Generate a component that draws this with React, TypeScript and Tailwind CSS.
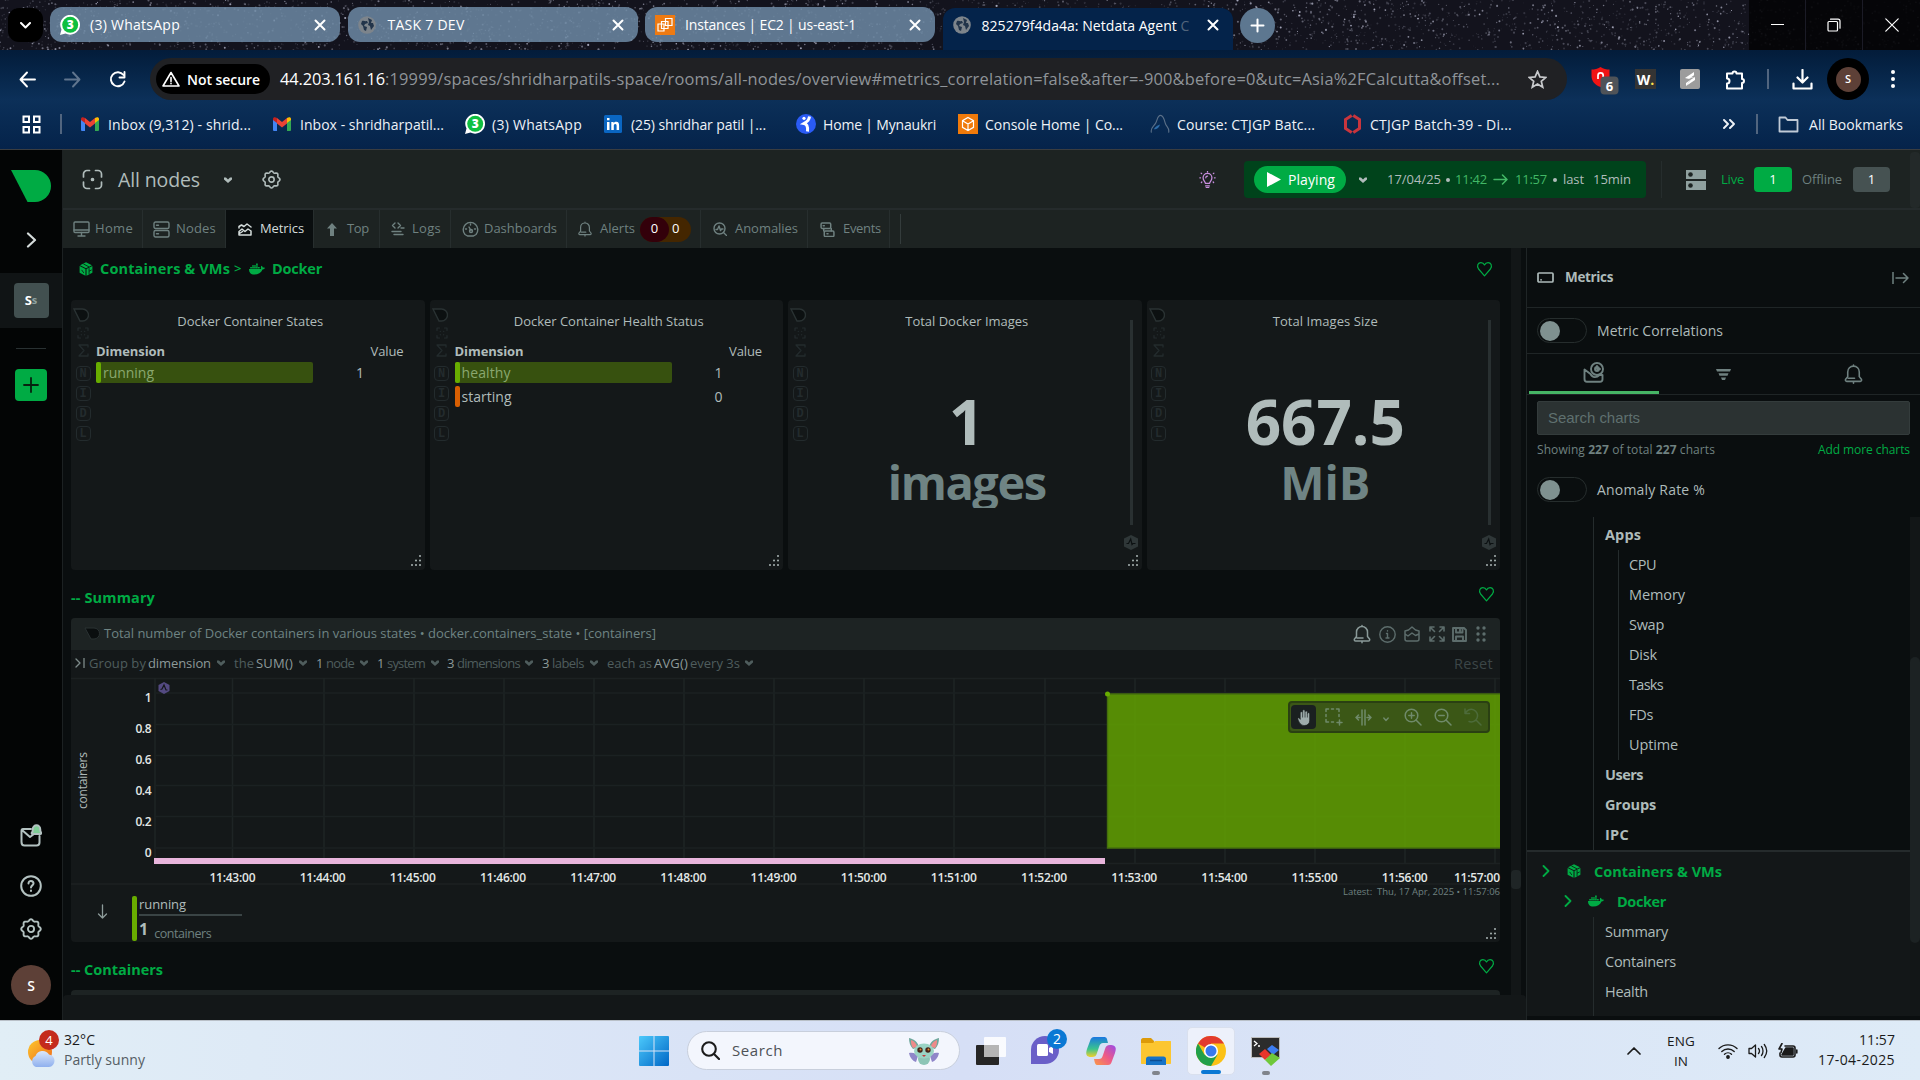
import { useLayoutEffect, useRef, useState, type ReactNode } from "react";
import { FaDocker } from "react-icons/fa";

/** A run of text whose tracking is adjusted so that it takes exactly `w` pixels. */
function Txt({ w, className = "", children }: { w: number; className?: string; children: ReactNode }) {
  const ref = useRef<HTMLSpanElement>(null);
  const [spacing, setSpacing] = useState(0);
  useLayoutEffect(() => {
    const el = ref.current;
    if (!el) return;
    const count = el.textContent?.length || 1;
    setSpacing((w - el.getBoundingClientRect().width) / count);
  }, [w]);
  return (
    <span ref={ref} className={`inline-block shrink-0 whitespace-pre ${className}`} style={{ letterSpacing: `${spacing}px` }}>
      {children}
    </span>
  );
}

type IconProps = { className?: string; children?: ReactNode; box?: string; sw?: number };
function Ico({ className = "size-5", children, box = "0 0 20 20", sw = 1.6 }: IconProps) {
  return (
    <svg viewBox={box} className={`shrink-0 ${className}`} fill="none" stroke="currentColor" strokeWidth={sw} strokeLinecap="round" strokeLinejoin="round">
      {children}
    </svg>
  );
}

/* ---------- shared icons ---------- */
const Caret = ({ className = "" }: { className?: string }) => (
  <svg viewBox="0 0 8 6" className={`h-[6px] w-[8px] shrink-0 ${className}`} fill="currentColor">
    <path d="M0 .5h2l2 2 2-2h2v2L4 6 0 2.500z" />
  </svg>
);
const gearPath =
  Array.from({ length: 96 }, (_, i) => {
    const a = (i / 96) * Math.PI * 2;
    const r = 8.1 + 0.8 * Math.cos(8 * a);
    return `${i ? "L" : "M"}${(10 + r * Math.sin(a)).toFixed(2)} ${(10 - r * Math.cos(a)).toFixed(2)}`;
  }).join("") + "z";
const Gear = ({ className = "" }: { className?: string }) => (
  <Ico className={className} sw={1.7}>
    <path d={gearPath} />
    <circle cx="10" cy="10" r="2.800" />
  </Ico>
);
const Bell = ({ className = "" }: { className?: string }) => (
  <Ico className={className} sw={1.5}>
    <path d="M10 1.500v1M4.500 12.500V8a5.500 5.500 0 0 1 11 0v4.500l2 2.500c.6 1-.1 2-1 2h-13c-.9 0-1.600-1-1-2zM5 14h6M10 17.200v1.600" />
  </Ico>
);
const Heart = () => (
  <Ico className="h-[16px] w-[17px] text-[#00ab44]" sw={1.5}>
    <path d="M10 18.500 2.600 10C-.3 6 2.200 2 5.500 2 8 2 9.300 3.500 10 5c.7-1.500 2-3 4.500-3 3.300 0 5.800 4 2.900 8z" />
  </Ico>
);
const Cube = ({ className = "" }: { className?: string }) => (
  <svg viewBox="0 0 16 16" className={`shrink-0 ${className}`} fill="currentColor">
    <path d="M8 .3 14.800 3.700 8 7.200 1.200 3.700zM.7 4.700 7.400 8.100v7.600L.7 12.200zM15.300 4.700 8.600 8.100v7.600l6.700-3.500z" />
    <path d="m5 2.200 6.500 3.400M3 9l2.500 3.500M11.500 7v3.500l3-1.500M11.500 10.500v3.500" stroke="#0a0e0f" strokeWidth=".9" fill="none" />
  </svg>
);
const Close = () => (
  <Ico className="size-[12px]" box="0 0 12 12" sw={2}>
    <path d="m1.500 1.500 9 9m0-9-9 9" />
  </Ico>
);
const Globe = () => (
  <svg viewBox="0 0 18 18" className="size-[18px] shrink-0">
    <circle cx="9" cy="9" r="8.800" fill="#7d848b" />
    <path d="M4 5c2-.5 3 .5 5 0l1 2-3 1-1 2 3 1-1 4-2-1-1-4-2-2zM10 2l4 2-1 3h2l1 3-3 4-1-4-2-1 1-3z" fill="#22344a" />
  </svg>
);
const WhatsApp = () => (
  <svg viewBox="0 0 20 20" className="size-[20px] shrink-0">
    <path d="M0 20 1.500 14.600A9.900 9.900 0 1 1 5.500 18.500z" fill="#fff" />
    <circle cx="10.200" cy="9.800" r="8" fill="#0fbf3f" />
    <text x="10.200" y="14.200" textAnchor="middle" fontSize="12" fontWeight="800" fill="#fff" fontFamily="Open Sans, sans-serif">3</text>
  </svg>
);
const Grip = () => (
  <svg viewBox="0 0 12 12" className="size-[12px] shrink-0 fill-[#aab5b4]">
    {[[10, 1], [10, 5.5], [6, 5.5], [10, 10], [6, 10], [2, 10]].map(([x, y]) => (
      <circle key={`${x}-${y}`} cx={x} cy={y} r="1" />
    ))}
  </svg>
);
const Hex = ({ className = "" }: { className?: string }) => (
  <svg viewBox="0 0 14 15" className={`h-[15px] w-[14px] shrink-0 ${className}`}>
    <path d="M7 0 14 3.500v8L7 15 0 11.500v-8z" fill="currentColor" />
    <path d="M2.500 8.500h2L6.700 4 8 9.500l1-1h2.500" fill="none" stroke="#0c1112" strokeWidth="1.200" />
  </svg>
);

/* ---------- browser ---------- */
function Stars() {
  let s = 7;
  const rnd = () => ((s = (s * 16807) % 2147483647) / 2147483647);
  const stars = Array.from({ length: 3600 }, () => [rnd() * 1920, rnd() * 50, 0.4 + rnd() * 0.7, 0.12 + rnd() * rnd() * 0.75]);
  return (
    <svg viewBox="0 0 1920 50" className="absolute inset-0 h-[50px] w-[1920px]">
      {stars.map(([x, y, r, o], i) => (
        <circle key={i} cx={x.toFixed(1)} cy={y.toFixed(1)} r={r.toFixed(2)} fill="#c9cbe0" opacity={o.toFixed(2)} />
      ))}
    </svg>
  );
}

function Tab({ icon, title, w }: { icon: ReactNode; title: string; w: number }) {
  return (
    <div className="flex h-[35px] w-[290px] shrink-0 items-center rounded-[12px] bg-[#6d8aa4]/85 pl-[10px] pr-[14px]">
      <div className="flex w-[30px]">{icon}</div>
      <Txt w={w} className="text-[14px]">{title}</Txt>
      <div className="flex-1" />
      <Close />
    </div>
  );
}

function TabStrip() {
  return (
    <div className="relative h-[50px] bg-[#13131d] text-white">
      <Stars />
      <div className="relative flex h-[50px] pl-[8px] pt-[7px]">
        <div className="mt-px flex h-[34px] w-[35px] items-center justify-center rounded-[11px] bg-black">
          <Ico className="h-[7px] w-[11px]" box="0 0 11 7" sw={2}><path d="m1 1 4.500 4.500L10 1" /></Ico>
        </div>
        <div className="ml-[7px] flex gap-[7.500px]">
          <Tab icon={<WhatsApp />} title="(3) WhatsApp" w={90} />
          <Tab icon={<Globe />} title="TASK 7 DEV" w={77} />
          <Tab
            icon={
              <svg viewBox="0 0 20 20" className="size-[20px]"><rect width="20" height="20" fill="#ee7a12" /><path d="M3 9h6v7H3zM6.500 6.500h6.500v7H6.500zM10.500 3.500H17v7h-6.500z" fill="none" stroke="#fff" strokeWidth="1.200" /></svg>
            }
            title="Instances | EC2 | us-east-1"
            w={171}
          />
          <div className="mt-px flex h-[42px] w-[290px] shrink-0 rounded-t-[12px] bg-[#04234a] pl-[10px] pr-[14px]">
            <div className="flex h-[34px] w-full items-center">
              <Globe />
              <Txt w={199} className="ml-[11px] text-[14px]">825279f4da4a: Netdata Agent </Txt>
              <span className="w-[8px] overflow-hidden text-[14px] text-[#53657c]">C</span>
              <div className="flex-1" />
              <Close />
            </div>
          </div>
        </div>
        <div className="ml-[7px] mt-px flex size-[35px] items-center justify-center rounded-full bg-[#5d7790]">
          <Ico className="size-[15px]" box="0 0 15 15" sw={2}><path d="M7.500 1.500v12m-6-6h12" /></Ico>
        </div>
        <div className="flex-1" />
        <div className="-mt-[7px] flex h-[50px] w-[171px] items-center bg-[#040407]/90">
          <div className="flex h-full w-[57px] items-center justify-center border-r border-[#1b1b26]"><div className="mb-[2px] h-px w-[13px] bg-white" /></div>
          <div className="flex h-full w-[57px] items-center justify-center border-r border-[#1b1b26]">
            <Ico className="size-[14px]" box="0 0 14 14" sw={1.2}><rect x="1" y="3.500" width="9.500" height="9.500" rx="1" /><path d="M3.500 1.200h7.500c1 0 2 .8 2 2v7" /></Ico>
          </div>
          <div className="flex h-full w-[57px] items-center justify-center"><Ico className="size-[14px]" box="0 0 14 14" sw={1.2}><path d="m.8.8 12.400 12.400m0-12.400L.8 13.200" /></Ico></div>
        </div>
      </div>
    </div>
  );
}

function Toolbar() {
  return (
    <div className="flex h-[58px] items-center pl-[19px] text-white">
      <Ico className="size-[17px]" box="0 0 17 17" sw={1.9}><path d="M8 1.500 1.500 8.500 8 15.500M2 8.500h14" /></Ico>
      <Ico className="ml-[28px] size-[17px] text-[#60758e]" box="0 0 17 17" sw={1.9}><path d="m9 1.500 6.500 7L9 15.500M15 8.500H1" /></Ico>
      <Ico className="ml-[28px] size-[17px]" box="0 0 17 17" sw={1.9}><path d="M15.500 10.500A7 7 0 1 1 14.500 4M15.500 1v5.500h-5" /></Ico>
      <div className="ml-[24px] flex h-[42px] w-[1417px] shrink-0 items-center rounded-full bg-[#202124] pl-[6px]">
        <div className="flex h-[30px] w-[114px] items-center rounded-full bg-black pl-[6px]">
          <Ico className="h-[16px] w-[18px]" box="0 0 18 16" sw={1.6}><path d="M9 1.500 17 15H1zM9 6.500v4M9 12.300v.4" /></Ico>
          <Txt w={73} className="ml-[7px] text-[14px] font-semibold">Not secure</Txt>
        </div>
        <Txt w={105} className="ml-[10px] text-[16.400px]">44.203.161.16</Txt>
        <Txt w={1115} className="text-[16.400px] text-[#8f9499]">:19999/spaces/shridharpatils-space/rooms/all-nodes/overview#metrics_correlation=false&amp;after=-900&amp;before=0&amp;utc=Asia%2FCalcutta&amp;offset...</Txt>
        <Ico className="ml-[28px] size-[19px] text-[#c7c9cc]" sw={1.8}><path d="m10 1.500 2.500 5.800 6.300.5-4.800 4.100 1.500 6.200L10 14.800l-5.500 3.300L6 11.900 1.200 7.800l6.300-.5z" strokeLinejoin="miter" /></Ico>
      </div>
      <div className="ml-[24px] flex w-[28px] items-center">
        <svg viewBox="0 0 28 28" className="mt-[3px] size-[28px]">
          <path d="M9.500 0c3 2 6 2.500 9 2.500V9c0 5-3.500 9-9 11-5.500-2-9-6-9-11V2.500c3 0 6-.5 9-2.500z" fill="#f01414" />
          <path d="M7 12V8.500a2.600 2.600 0 0 1 5.200 0V10" stroke="#fff" strokeWidth="1.700" fill="none" />
          <rect x="9.500" y="9.500" width="18" height="18" rx="4" fill="#4f5358" />
          <text x="18.500" y="23.500" textAnchor="middle" fontSize="13" fontWeight="700" fill="#fff" fontFamily="Open Sans, sans-serif">6</text>
        </svg>
      </div>
      <div className="ml-[16px] flex h-[20px] w-[21px] shrink-0 items-center justify-center bg-[#343434] text-[14px] font-bold">W<span className="text-[#ffe14d]">.</span></div>
      <svg viewBox="0 0 20 20" className="ml-[24px] size-[20px] shrink-0"><rect width="20" height="20" rx="2" fill="#9c9c9c" /><path d="m5 9 9-6v3.200l-5 3.500zM6 17l9-6V8L11 10.500z" fill="#fff" /><path d="m5 9 4.500.500L15 8M6 17v-3l5-3.500" fill="#fff" /></svg>
      <Ico className="ml-[25px] size-[21px]" box="0 0 21 21" sw={2}><path d="M2 4.500h5.500a2 2 0 1 1 4 0H17V10a2 2 0 1 1 0 4v5.500H2V14.500a2.300 2.300 0 0 0 0-5z" /></Ico>
      <div className="ml-[21px] h-[20px] w-[2px] bg-[#51657f]" />
      <Ico className="ml-[23px] size-[21px]" box="0 0 21 21" sw={2.2}><path d="M10.500 1v12M5.500 8.500l5 5 5-5M1.500 14.500v5h18v-5" /></Ico>
      <div className="ml-[14px] flex size-[42px] shrink-0 items-center justify-center rounded-full bg-black">
        <div className="flex size-[25px] items-center justify-center rounded-full bg-[#5d4037] text-[11px] font-semibold">S</div>
      </div>
      <svg viewBox="0 0 4 18" className="ml-[22px] h-[18px] w-[4px] fill-white"><circle cx="2" cy="2" r="2" /><circle cx="2" cy="9" r="2" /><circle cx="2" cy="16" r="2" /></svg>
    </div>
  );
}

const Gmail = () => (
  <svg viewBox="0 0 18 14" className="h-[14px] w-[18px]">
    <path d="M0 2v11a1 1 0 0 0 1 1h3V5z" fill="#4285f4" /><path d="M18 2v11a1 1 0 0 1-1 1h-3V5z" fill="#34a853" />
    <path d="M14 1v5l4-3V2c0-2-2-2.500-4-1z" fill="#fbbc04" /><path d="M4 1v5L0 3V2C0 0 2-.5 4 1z" fill="#c5221f" /><path d="m4 1 5 4 5-4v5.500L9 10.500 4 6.500z" fill="#ea4335" />
  </svg>
);

function Bookmark({ icon, text, w, cell }: { icon: ReactNode; text: string; w: number; cell: string }) {
  return (
    <div className={`flex shrink-0 items-center ${cell}`}>
      <div className="flex w-[27px] items-center">{icon}</div>
      <Txt w={w} className="text-[14px]">{text}</Txt>
    </div>
  );
}

function Bookmarks() {
  return (
    <div className="flex h-[41px] items-start text-[#eef2f7]">
      <div className="flex h-[32px] w-full items-center pl-[22px]">
        <svg viewBox="0 0 19 19" className="size-[19px] shrink-0" fill="none" stroke="#fff" strokeWidth="2"><path d="M1.500 1.500h5.500V7H1.500zM12 1.500h5.500V7H12zM1.500 12h5.500v5.500H1.500zM12 12h5.500v5.500H12z" /></svg>
        <div className="ml-[19px] mr-[19px] h-[20px] w-[2px] shrink-0 bg-[#51657f]" />
        <Bookmark icon={<Gmail />} text="Inbox (9,312) - shrid..." w={143} cell="w-[192px]" />
        <Bookmark icon={<Gmail />} text="Inbox - shridharpatil..." w={144} cell="w-[192px]" />
        <Bookmark icon={<WhatsApp />} text="(3) WhatsApp" w={90} cell="w-[139px]" />
        <Bookmark icon={<svg viewBox="0 0 18 18" className="size-[18px]"><rect width="18" height="18" rx="1.500" fill="#0a66c2" /><path d="M3 7h2.500v8H3zM3 3h2.500v2.300H3zM7.300 7h2.300v1.200C10.300 7 11.300 6.800 12.200 6.800c2.300 0 2.900 1.500 2.900 3.600V15h-2.500v-4.200c0-1-.2-1.900-1.300-1.900S9.800 9.800 9.800 10.800V15H7.300z" fill="#fff" /></svg>} text="(25) shridhar patil |..." w={135} cell="w-[192px]" />
        <Bookmark icon={<svg viewBox="0 0 20 20" className="size-[20px]"><circle cx="10" cy="10" r="10" fill="#2a5bf5" /><circle cx="8" cy="4.300" r="1.600" fill="#fff" /><path d="M13.500 2.500C13 6 12 7 8 9.500c3 .5 4 3 3.500 8" fill="none" stroke="#fff" strokeWidth="3" /></svg>} text="Home | Mynaukri" w={113} cell="w-[162px]" />
        <Bookmark icon={<svg viewBox="0 0 20 20" className="size-[20px]"><rect width="20" height="20" fill="#f07a0a" /><path d="m10 3.500 5.500 3.200v6.600L10 16.500l-5.500-3.200V6.700zM4.500 6.700 10 10l5.500-3.300M10 10v6.500" stroke="#fff" strokeWidth="1.200" fill="none" /></svg>} text="Console Home | Co..." w={138} cell="w-[192px]" />
        <Bookmark icon={<svg viewBox="0 0 21 20" className="size-[20px]" fill="none" stroke="#5b7088" strokeWidth="1.200"><path d="M1.500 19C0 14 4 13 6 9s2-8 5-8 4 4 5 8 5 5 3.500 10" /><path d="M4 15.500c4 0 5.500-2 6.500-5-2.500 1-5 2-6.500 5z" fill="#2d6ca8" stroke="none" /></svg>} text="Course: CTJGP Batc..." w={138} cell="w-[193px]" />
        <Bookmark icon={<svg viewBox="0 0 19 20" className="h-[20px] w-[19px]" fill="none" stroke="#c9353d" strokeWidth="3"><path d="M8.700 1.500 2.500 5.500v9l6.200 4M10.300 1.500l6.200 4v9l-6.200 4" /></svg>} text="CTJGP Batch-39 - Di..." w={142} cell="w-[380px]" />
        <Ico className="h-[10px] w-[12px]" box="0 0 12 10" sw={1.9}><path d="m1 1 4 4-4 4M7 1l4 4-4 4" /></Ico>
        <div className="ml-[21px] h-[20px] w-[2px] bg-[#51657f]" />
        <Ico className="ml-[20px] h-[17px] w-[21px] text-[#c0cad6]" box="0 0 21 17" sw={1.8}><path d="M1.500 1.500h6l2 2.500h10v11.500h-18z" /></Ico>
        <Txt w={94} className="ml-[10px] text-[14px]">All Bookmarks</Txt>
      </div>
    </div>
  );
}

/* ---------- netdata ---------- */
function Sidebar() {
  return (
    <div className="flex h-full w-[63px] shrink-0 flex-col items-center border-r border-[#1c2122] bg-[#030505] pt-[20px]">
      <svg viewBox="0 0 40 32" className="h-[32px] w-[40px] shrink-0"><path d="M0 0h24a16 16 0 0 1 0 32h-7.500z" fill="#00ab44" /></svg>
      <Ico className="mt-[30px] h-[16px] w-[11px] shrink-0 text-[#d5dcdb]" box="0 0 11 16" sw={2.2}><path d="m2 1.500 7 6.500-7 6.500" /></Ico>
      <div className="mt-[25px] flex h-[55px] w-full shrink-0 items-center justify-center bg-[#101415]">
        <div className="flex size-[35px] items-center justify-center rounded-[4px] bg-[#425050] text-[13px] font-bold text-white">S<span className="text-[11px] text-[#8fa2a1]">s</span></div>
      </div>
      <div className="mt-[20px] h-px w-[30px] shrink-0 bg-[#293132]" />
      <div className="mt-[20px] flex size-[32px] shrink-0 items-center justify-center rounded-[4px] bg-[#00ab44] text-[#07210f]">
        <Ico className="size-[16px]" box="0 0 16 16" sw={1.8}><path d="M8 1v14M1 8h14" /></Ico>
      </div>
      <div className="flex-1" />
      <Ico className="h-[23px] w-[22px] shrink-0 text-[#b3c2c1]" box="0 0 22 23" sw={2}>
        <path d="M11 5H3C2 5 1.500 6 1.500 7v11c0 2 1 3.500 3 3.500h12c2 0 3-1 3-3V12M2 6l8 7 4-3" />
        <path d="M12.500 10c-.8 0-1-1-.5-1.500.8-.8.8-2 .8-3.500a3.700 3.700 0 0 1 7.400 0c0 1.500.2 2.700.8 3.500.5.500.2 1.500-.5 1.500z" fill="#7fce97" />
      </Ico>
      <Ico className="mt-[28px] size-[22px] shrink-0 text-[#b3c2c1]" box="0 0 22 22" sw={2}><circle cx="11" cy="11" r="9.800" /><path d="M8.500 8.500C8.500 5 13.500 5.500 13.500 8.500c0 1.800-2.500 2-2.500 4M11 15.500v.4" /></Ico>
      <Gear className="mt-[21px] size-[22px] shrink-0 text-[#b3c2c1]" />
      <div className="mb-[15px] mt-[25px] flex size-[40px] shrink-0 items-center justify-center rounded-full bg-[#5d4037] text-[14px] font-semibold text-white">S</div>
    </div>
  );
}

function TopBar() {
  return (
    <div className="flex h-[60px] shrink-0 items-center border-b-2 border-[#252b2c] bg-[#1d2322] pl-[19px] pt-[1px] text-[#b0bcbb]">
      <Ico className="size-[21px]" box="0 0 21 21" sw={1.7}><path d="M7.500 1.500H5A3.500 3.500 0 0 0 1.500 5v3M13.500 1.500H16A3.500 3.500 0 0 1 19.500 5v3M7.500 19.500H5A3.500 3.500 0 0 1 1.500 16v-3M13.500 19.500H16a3.500 3.500 0 0 0 3.500-3.500v-3" /><circle cx="10.500" cy="10.500" r="1" fill="currentColor" /></Ico>
      <Txt w={82} className="ml-[15px] text-[19.500px]">All nodes</Txt>
      <Caret className="ml-[24px]" />
      <Gear className="ml-[30px] size-[19px]" />
      <Ico className="ml-[918px] size-[17px] text-[#c98fe0]" sw={1.5}><path d="M7.500 14.500C7.500 12.500 4.800 11.500 4.800 8a5.200 5.200 0 0 1 10.400 0c0 3.500-2.700 4.500-2.700 6.500zM7.800 17.500h4.400M8.500 19.500h3M10 .5v.6M2.500 2.500l.6.6M17.500 2.500l-.6.6M1 8h.8M18.200 8h.8M2.800 13.500l.5-.5M17.200 13.500l-.5-.5M8 8a2 2 0 0 1 2-2" /></Ico>
      <div className="ml-[28px] flex h-[37px] w-[402px] shrink-0 items-center rounded-[4px] bg-[#00431b] pl-[10px] text-[14px]">
        <div className="flex h-[27px] w-[92px] items-center rounded-full bg-[#00ab44] pl-[13px] text-white">
          <svg viewBox="0 0 14 15" className="h-[15px] w-[14px] fill-white"><path d="M0 0 14 7.500 0 15z" /></svg>
          <Txt w={47} className="ml-[7px] text-[14px] font-medium">Playing</Txt>
        </div>
        <Caret className="ml-[13px]" />
        <Txt w={54} className="ml-[20px] text-[13px]">17/04/25</Txt>
        <span className="ml-[5px] size-[4px] rounded-full bg-current" />
        <Txt w={32} className="ml-[5px] text-[13px] text-[#42b866]">11:42</Txt>
        <Ico className="ml-[6px] h-[11px] w-[15px] text-[#42b866]" box="0 0 15 11" sw={1.5}><path d="M1 5.500h13M9.500 1l4.500 4.500L9.500 10" /></Ico>
        <Txt w={32} className="ml-[7px] text-[13px] text-[#42b866]">11:57</Txt>
        <span className="ml-[6px] size-[4px] rounded-full bg-current" />
        <Txt w={21} className="ml-[6px] text-[13px]">last</Txt>
        <Txt w={38} className="ml-[9px] text-[13px]">15min</Txt>
      </div>
      <div className="ml-[15px] h-[37px] w-px shrink-0 bg-[#262d2d]" />
      <svg viewBox="0 0 20 20" className="ml-[24px] size-[20px] shrink-0"><path d="M0 0h20v9H0zM0 11h20v9H0z" fill="#8fa09f" /><circle cx="4.500" cy="4.500" r="2.300" fill="#1d2322" /><circle cx="4.500" cy="15.500" r="2.300" fill="#1d2322" /></svg>
      <Txt w={23} className="ml-[15px] text-[13px] text-[#00ab44]">Live</Txt>
      <div className="ml-[10px] flex h-[25px] w-[38px] shrink-0 items-center justify-center rounded-[4px] bg-[#00ab44] text-[13px] text-white">1</div>
      <Txt w={40} className="ml-[10px] text-[13px] text-[#6d807f]">Offline</Txt>
      <div className="ml-[11px] flex h-[25px] w-[37px] shrink-0 items-center justify-center rounded-[4px] bg-[#465252] text-[13px] text-white">1</div>
      <div className="flex-1" />
      <div className="h-[56px] w-[10px] shrink-0 rounded bg-[#232929]" />
    </div>
  );
}

function NavTab({ icon, text, w, cell, active }: { icon: ReactNode; text: string; w: number; cell: string; active?: boolean }) {
  return (
    <div className={`flex h-full shrink-0 items-center border-r border-[#272e2e] ${cell} ${active ? "bg-[#0a0e0f] text-[#d5dddc]" : ""}`}>
      {icon}
      <Txt w={w} className="text-[13px]">{text}</Txt>
    </div>
  );
}

function NavTabs() {
  return (
    <div className="flex h-[38px] shrink-0 items-center bg-[#1d2322] text-[#6f8180]">
      <NavTab cell="w-[80px] pl-[10px]" text="Home" w={38} icon={<Ico className="mr-[5px] h-[16px] w-[17px]" box="0 0 17 16" sw={1.4}><rect x="1" y="1" width="15" height="10.500" rx="1" /><path d="M1 9h15M8.500 11.500V15M5 15h7" /></Ico>} />
      <NavTab cell="w-[83px] pl-[10px]" text="Nodes" w={40} icon={<Ico className="mr-[6px] h-[17px] w-[17px]" box="0 0 17 17" sw={1.4}><rect x="1" y="1" width="15" height="6.500" rx="1.500" /><rect x="1" y="9.500" width="15" height="6.500" rx="1.500" /><path d="M3.500 4.200h2M3.500 12.800h2" /></Ico>} />
      <NavTab cell="w-[88px] pl-[12px]" active text="Metrics" w={44} icon={<Ico className="mr-[8px] h-[13px] w-[14px]" box="0 0 14 13" sw={1.5}><path d="M1 5V3.500L3.500 2 6 3.500 9 1l4 3M1 8.500 4 6l3 2.500L10 6l3 2M1 8.500V12h12V8M1.500 10.500l3-2" /></Ico>} />
      <NavTab cell="w-[66px] pl-[13px]" text="Top" w={22} icon={<svg viewBox="0 0 10 13" className="mr-[10px] h-[13px] w-[10px]" fill="currentColor"><path d="m5 0 5 5.500H7V13H3V5.500H0z" /></svg>} />
      <NavTab cell="w-[71px] pl-[11px]" text="Logs" w={29} icon={<Ico className="mr-[7px] size-[14px]" box="0 0 14 14" sw={1.4}><path d="M4 1 1.500 3.500 4 6M7 1l2.500 2.500L7 6M10 6h3M1 9.500h9M3 12.500h9" /></Ico>} />
      <NavTab cell="w-[116px] pl-[11px]" text="Dashboards" w={73} icon={<Ico className="mr-[5px] size-[17px]" box="0 0 17 17" sw={1.4}><path d="M3 13.500a7.300 7.300 0 1 1 11 0l-2.500 1.500h-6zM7 6l2 3.500M3.500 8h1M12.500 8h1M8.500 3v1" /><circle cx="9" cy="10" r="1.500" /></Ico>} />
      <div className="flex h-full w-[134px] shrink-0 items-center border-r border-[#272e2e] pl-[10px]">
        <Bell className="h-[18px] w-[16px]" />
        <Txt w={35} className="ml-[7px] text-[13px]">Alerts</Txt>
        <div className="ml-[5px] flex h-[25px] w-[51px] items-center rounded-full bg-[#442600] text-[13px] text-white">
          <div className="flex h-[25px] w-[29px] items-center justify-center rounded-full bg-[#33000a]">0</div>
          <span className="ml-[3px]">0</span>
        </div>
      </div>
      <NavTab cell="w-[107px] pl-[12px]" text="Anomalies" w={63} icon={<Ico className="mr-[8px] size-[14px]" box="0 0 14 14" sw={1.4}><circle cx="6.500" cy="6.500" r="5.500" /><path d="m10.500 10.500 3 3M3 7.500h1.500L6 4l1.500 4.500L8.500 7H10" /></Ico>} />
      <NavTab cell="w-[82px] pl-[12px]" text="Events" w={38} icon={<Ico className="mr-[8px] size-[15px]" box="0 0 14 14" sw={1.4}><rect x="1" y="1" width="9" height="5" rx="1" /><rect x="4" y="8.500" width="9" height="5" rx="1" /><path d="M3.500 6v2.500M3 3.500h1M6.500 11h1M10.500 6v2.500" /></Ico>} />
      <div className="ml-[10px] h-[30px] w-px bg-[#343c3c]" />
    </div>
  );
}

const RailLetter = ({ c }: { c: string }) => (
  <div className="mt-[5px] flex h-[15px] w-[15px] items-center justify-center rounded-[4px] border border-current font-['Liberation_Mono',monospace] text-[12px] font-bold leading-none">{c}</div>
);

function CardRail() {
  return (
    <div className="flex w-[25px] shrink-0 flex-col pl-[2px] pt-[8px] text-[#232b2d]">
      <svg viewBox="0 0 16 14" className="h-[14px] w-[16px]"><path d="M1 1h8.500a5.500 5.500 0 0 1 0 12H7z" fill="#0c1011" stroke="#2a3233" strokeWidth="1.400" /></svg>
      <div className="flex flex-col items-center pr-[3px]">
        <Ico className="mt-[5px] size-[12px]" box="0 0 12 12" sw={1.2}><path d="M1 3.500V1h2.500M8.500 1H11v2.500M11 8.500V11H8.500M3.500 11H1V8.500M4.300 4.300v.1M7.700 4.300v.1M4.300 7.700v.1M7.700 7.700v.1" /></Ico>
        <Ico className="mb-[4px] mt-[5px] h-[13px] w-[11px]" box="0 0 11 13" sw={1.3}><path d="M10 3V1H1l5 5.500L1 12h9v-2" /></Ico>
        <RailLetter c="N" /><RailLetter c="I" /><RailLetter c="D" /><RailLetter c="L" />
      </div>
    </div>
  );
}

function TableCard({ title, w, rows }: { title: string; w: number; rows: { name: string; w: number; value: string; full: boolean }[] }) {
  return (
    <div className="relative flex h-[270px] rounded-[4px] bg-[#141819] text-[#b0bcbb]">
      <CardRail />
      <div className="flex flex-1 flex-col">
        <div className="flex h-[44px] items-center justify-center pr-[20px]"><Txt w={w} className="text-[13px]">{title}</Txt></div>
        <div className="flex h-[18px] items-center justify-between pb-[2px] pr-[21px]">
          <Txt w={69} className="text-[13px] font-bold">Dimension</Txt>
          <Txt w={33} className="text-[13px]">Value</Txt>
        </div>
        {rows.map((r) => (
          <div key={r.name} className="mb-[3px] flex h-[21px] items-center">
            <div className={`flex h-[21px] w-[217px] items-center rounded-[2px] ${r.full ? "bg-[#37510f] text-[#8aa86f]" : ""}`}>
              <div className={`h-[21px] w-[5px] rounded-[2px] ${r.full ? "bg-[#68ad00]" : "bg-[#d95f02]"}`} />
              <Txt w={r.w} className="ml-[2px] text-[14px]">{r.name}</Txt>
            </div>
            <span className="ml-[43px] text-[14px]">{r.value}</span>
          </div>
        ))}
      </div>
      <div className="absolute bottom-[3px] right-[3px]"><Grip /></div>
    </div>
  );
}

function NumberCard({ title, tw, value, vw, unit, uw }: { title: string; tw: number; value: string; vw: number; unit: string; uw: number }) {
  return (
    <div className="relative flex h-[270px] rounded-[4px] bg-[#141819] text-[#b0bcbb]">
      <CardRail />
      <div className="flex flex-1 flex-col items-center pr-[21px]">
        <div className="flex h-[44px] items-center"><Txt w={tw} className="text-[13px]">{title}</Txt></div>
        <div className="mt-[42px] h-[74px] font-bold leading-[70px]"><Txt w={vw} className="text-[62px] leading-[70px]">{value}</Txt></div>
        <div className="h-[48px] overflow-hidden font-bold leading-[48px] text-[#6f8484]"><Txt w={uw} className="text-[47px] leading-[44px]">{unit}</Txt></div>
      </div>
      <div className="absolute bottom-[45px] right-[9px] h-[205px] w-[3px] bg-[#293031]" />
      <div className="absolute bottom-[20px] right-[4px] text-[#2f3738]"><Hex /></div>
      <div className="absolute bottom-[3px] right-[3px]"><Grip /></div>
    </div>
  );
}

const xs = [84, 161.5, 253, 343, 433, 523, 613, 703, 793, 883, 974, 1064, 1154, 1244, 1334, 1424];
const ys = [15, 46.5, 77.5, 107.5, 138.5, 170];

function Chart() {
  return (
    <svg viewBox="0 0 1429 206" className="block h-[206px] w-[1429px] overflow-visible" fontFamily="Open Sans, sans-serif">
      <path d="M0 .5h1429M84 185.500h1345M0 206h1429" stroke="#1c2122" strokeWidth="1.500" />
      {xs.map((x) => <path key={x} d={`M${x} 0V185`} stroke="#1e2425" strokeWidth="1.500" />)}
      {ys.map((y) => <path key={y} d={`M84 ${y}H1429`} stroke="#1b2122" strokeWidth="1.500" />)}
      <rect x="1036.500" y="16" width="392.500" height="154" fill="#66aa00" fillOpacity=".8" />
      <path d="M1429 16H1036.500V170H1429" fill="none" stroke="#45700c" strokeWidth="1.400" />
      <circle cx="1036.500" cy="16" r="2.500" fill="#68ad00" />
      <rect x="83" y="180" width="951" height="6" fill="#e8b5dc" />
      <path d="m93 4 5.500 3v6L93 16l-5.500-3V7z" fill="#544a82" />
      <path d="M89.500 11.500 91 11l2-4 2 5h1.500" fill="none" stroke="#141819" strokeWidth="1.200" />
      {["1", "0.8", "0.6", "0.4", "0.2", "0"].map((t, i) => (
        <text key={t} x="80" y={24 + i * 30.9} textAnchor="end" fontSize="12" fontWeight="600" letterSpacing="-.5" fill="#e3e8e7">{t}</text>
      ))}
      {Array.from({ length: 15 }, (_, i) => (
        <text key={i} x={i === 14 ? 1406 : 161.5 + i * 90.17} y="203.500" textAnchor="middle" fontSize="12" fontWeight="600" textLength="46" fill="#e3e8e7">{`11:${43 + i}:00`}</text>
      ))}
      <text transform="translate(15.500 102.500) rotate(-90)" textAnchor="middle" fontSize="12" textLength="57" fill="#aeb9b8">containers</text>
    </svg>
  );
}

function ChartTools() {
  return (
    <div className="absolute right-[10px] top-[83px] flex h-[32px] w-[202px] items-center rounded-[4px] border-2 border-[#2a4012] bg-[#3b5716] pl-[1px] text-[#6f8a6a]">
      <div className="flex h-[24px] w-[25px] shrink-0 items-center justify-center rounded-[4px] bg-[#1a2020]">
        <svg viewBox="0 0 14 18" className="h-[17px] w-[14px]" fill="#9eadac" stroke="#1a2020" strokeWidth=".7"><path d="M3 9V4a1.300 1.300 0 0 1 2.500-.3V2a1.300 1.300 0 0 1 2.600 0v1a1.300 1.300 0 0 1 2.500.4V5a1.200 1.200 0 0 1 2.400.2V12c0 3.500-2 5.500-5.500 5.500C3.500 17.500 2 14.500.6 11c-.6-1.600.9-2.500 1.700-1.300L3 11z" /><path d="M5.500 4v5M8.100 3v6M10.600 5v4" /></svg>
      </div>
      <Ico className="ml-[9px] size-[18px]" box="0 0 18 18" sw={1.5}><path d="M1 3.500V1h2.500M6.500 1h2M11.500 1H14v2.500M14 6.500v2M1 6.500v2M1 11.500V14h2.500M6.500 14h2M14.500 12v5M12 14.500h5" /></Ico>
      <Ico className="ml-[12px] size-[17px]" box="0 0 17 17" sw={1.5}><path d="M7 1v15M10 1v15M5 8.500H1m0 0L3.500 6M1 8.500 3.500 11M12 8.500h4m0 0L13.500 6M16 8.500 13.500 11" /></Ico>
      <Ico className="ml-[11px] mt-[5px] h-[5px] w-[6px]" box="0 0 6 5" sw={1.4}><path d="m.8 1 2.200 2.500L5.200 1" /></Ico>
      <Ico className="ml-[15px] size-[18px]" box="0 0 18 18" sw={1.5}><circle cx="7.500" cy="7.500" r="6.300" /><path d="m12 12 5 5M4.800 7.500h5.400M7.500 4.800v5.400" /></Ico>
      <Ico className="ml-[12px] size-[18px]" box="0 0 18 18" sw={1.5}><circle cx="7.500" cy="7.500" r="6.300" /><path d="m12 12 5 5M4.800 7.500h5.400" /></Ico>
      <Ico className="ml-[12px] size-[18px] text-[#4d6b3a]" box="0 0 18 18" sw={1.5}><path d="M1 1v4.500h4.500M1.500 5A6.300 6.300 0 1 1 5 13.500M12 12l5 5" /></Ico>
    </div>
  );
}

function GroupControls() {
  const hi = "text-[13px] text-[#8d9a99]";
  const lo = "text-[13px] text-[#4f5d5d]";
  const caret = "text-[#4f5d5d] -mt-[2px]";
  return (
    <div className="flex h-[28px] items-center pl-[4px] pr-[7px] text-[#4f5d5d]">
      <Ico className="-mt-[2px] size-[10px] text-[#7d8b8a]" box="0 0 10 10" sw={1.3}><path d="m1 1 4 4-4 4M9 0v10" /></Ico>
      <Txt w={57} className={`ml-[4px] ${lo}`}>Group by</Txt>
      <Txt w={63} className={`ml-[2px] ${hi}`}>dimension</Txt><Caret className={`ml-[6px] ${caret}`} />
      <Txt w={20} className={`ml-[9px] ${lo}`}>the</Txt>
      <Txt w={37} className={`ml-[2px] ${hi}`}>SUM()</Txt><Caret className={`ml-[6px] ${caret}`} />
      <Txt w={7} className={`ml-[9px] ${hi}`}>1</Txt>
      <Txt w={28} className={`ml-[3px] ${lo}`}>node</Txt><Caret className={`ml-[6px] ${caret}`} />
      <Txt w={7} className={`ml-[9px] ${hi}`}>1</Txt>
      <Txt w={38} className={`ml-[3px] ${lo}`}>system</Txt><Caret className={`ml-[6px] ${caret}`} />
      <Txt w={7} className={`ml-[8px] ${hi}`}>3</Txt>
      <Txt w={63} className={`ml-[3px] ${lo}`}>dimensions</Txt><Caret className={`ml-[5px] ${caret}`} />
      <Txt w={7} className={`ml-[9px] ${hi}`}>3</Txt>
      <Txt w={32} className={`ml-[3px] ${lo}`}>labels</Txt><Caret className={`ml-[6px] ${caret}`} />
      <Txt w={45} className={`ml-[9px] ${lo}`}>each as</Txt>
      <Txt w={34} className={`ml-[2px] ${hi}`}>AVG()</Txt>
      <Txt w={50} className={`ml-[2px] ${lo}`}>every 3s</Txt><Caret className={`ml-[5px] ${caret}`} />
      <div className="flex-1" />
      <Txt w={39} className="text-[14.500px] text-[#3c4647]">Reset</Txt>
    </div>
  );
}

function ChartCard() {
  return (
    <div className="relative h-[324px] w-[1429px] shrink-0 rounded-[4px] bg-[#141819]">
      <div className="flex h-[32px] items-center rounded-t-[4px] bg-[#1d2323] pl-[13px] text-[#5d6d6c]">
        <svg viewBox="0 0 16 13" className="-mt-[2px] h-[13px] w-[16px]"><path d="M1 1h9a5.500 5.500 0 0 1 0 11H7z" fill="#0a0e0f" stroke="#2a3233" strokeWidth="1" /></svg>
        <Txt w={552} className="ml-[4px] text-[13px] text-[#6f8483]">Total number of Docker containers in various states • docker.containers_state • [containers]</Txt>
        <div className="flex-1" />
        <Bell className="size-[20px] text-[#8a9a99]" />
        <Ico className="ml-[7px] size-[17px]" box="0 0 17 17" sw={1.4}><circle cx="8.500" cy="8.500" r="7.700" /><path d="M7.500 7.500h1V12M7 12h3M8.500 4.800v.3" /></Ico>
        <Ico className="ml-[8px] size-[16px]" box="0 0 16 16" sw={1.5}><path d="M1 5l3.500-1L8 1l3.500 3L15 5v8c0 1-.5 2-2 2H3c-1.500 0-2-1-2-2zM1 8l3 2 4-3 3.500 2.500L15 8" /></Ico>
        <Ico className="ml-[9px] size-[16px]" box="0 0 16 16" sw={1.6}><path d="M1 5V1h4M1 1l4.500 4.500M11 1h4v4M15 1l-4.500 4.500M15 11v4h-4M15 15l-4.500-4.500M5 15H1v-4M1 15l4.500-4.500" /></Ico>
        <Ico className="ml-[7px] size-[15px]" box="0 0 15 15" sw={1.9}><path d="M1 1h11l2 2v11H1zM4 1v4.500h6.500V1M4 14V9.500h7V14M8 2.500v1.500" /></Ico>
        <svg viewBox="0 0 10 16" className="ml-[9px] mr-[14px] h-[16px] w-[10px] fill-[#5d6d6c]">{[2, 8, 14].map((y) => <g key={y}><circle cx="2" cy={y} r="1.700" /><circle cx="8" cy={y} r="1.700" /></g>)}</svg>
      </div>
      <GroupControls />
      <Chart />
      <ChartTools />
      <div className="flex h-[58px]">
        <Ico className="ml-[26px] mt-[20px] h-[15px] w-[11px] text-[#8d9b9a]" box="0 0 11 15" sw={1.3}><path d="M5.500 1v13M1.500 10l4 4 4-4" /></Ico>
        <div className="ml-[24px] mt-[12px] h-[45px] w-[5px] rounded-[2px] bg-[#68ad00]" />
        <div className="ml-[2px] mt-[12px] w-[103px]">
          <div className="flex h-[20px] items-center border-b-2 border-[#3a4445] text-[#b0bcbb]"><Txt w={47} className="text-[13px]">running</Txt></div>
          <div className="flex h-[27px] items-end text-[#6f8180]"><span className="text-[16px] font-bold leading-[27px] text-[#b0bcbb]">1</span><Txt w={57} className="ml-[6px] text-[12.500px] leading-[19px]">containers</Txt></div>
        </div>
        <div className="flex-1" />
        <div className="flex flex-col items-end">
          <Txt w={157} className="text-[9.500px] leading-[16px] text-[#6f8180]">Latest:  Thu, 17 Apr, 2025 • 11:57:06</Txt>
          <div className="mr-[3px] mt-[28px]"><Grip /></div>
        </div>
      </div>
    </div>
  );
}

function SectionTitle({ text, w }: { text: string; w: number }) {
  return (
    <div className="flex h-[48px] w-[1429px] shrink-0 items-center justify-between pr-[5px] text-[#00ab44]">
      <Txt w={w} className="mt-[7px] text-[14.500px] font-bold">{text}</Txt>
      <Heart />
    </div>
  );
}

function Main() {
  return (
    <div className="flex min-w-0 flex-1 flex-col bg-[#0a0e0f]">
      <div className="flex h-[747px] shrink-0 overflow-hidden">
        <div className="flex w-[1448px] shrink-0 flex-col pl-[8px]">
          <div className="flex h-[52px] w-[1429px] shrink-0 items-center pb-[10px] pl-[8px] pr-[7px] text-[#00ab44]">
            <Cube className="size-[14px]" />
            <Txt w={130} className="ml-[7px] text-[14.500px] font-bold">Containers &amp; VMs</Txt>
            <span className="ml-[4px] w-[8px] text-[13px] font-semibold">&gt;</span>
            <FaDocker className="ml-[7px] size-[16px]" />
            <Txt w={50} className="ml-[7px] text-[14.500px] font-bold">Docker</Txt>
            <div className="flex-1" />
            <Heart />
          </div>
          <div className="grid w-[1429px] shrink-0 grid-cols-4 gap-[5px]">
            <TableCard title="Docker Container States" w={146} rows={[{ name: "running", w: 51, value: "1", full: true }]} />
            <TableCard title="Docker Container Health Status" w={190} rows={[{ name: "healthy", w: 49, value: "1", full: true }, { name: "starting", w: 50, value: "0", full: false }]} />
            <NumberCard title="Total Docker Images" tw={123} value="1" vw={36} unit="images" uw={158} />
            <NumberCard title="Total Images Size" tw={105} value="667.5" vw={159} unit="MiB" uw={90} />
          </div>
          <SectionTitle text="-- Summary" w={84} />
          <ChartCard />
          <SectionTitle text="-- Containers" w={92} />
          <div className="h-[30px] w-[1429px] shrink-0 rounded-t-[4px] bg-[#1d2323]" />
        </div>
        <div className="h-full w-[10px] bg-[#121617] pt-[622px]"><div className="h-[19px] rounded-[4px] bg-[#1f2526]" /></div>
      </div>
      <div className="h-[25px] rounded-t-[4px] bg-[#131718]" />
    </div>
  );
}

function Toggle() {
  return (
    <div className="flex h-[25px] w-[50px] shrink-0 items-center rounded-full border border-[#262d2d] pl-[2px]">
      <div className="size-[20px] rounded-full bg-[#7f9190]" />
    </div>
  );
}

const Leaf = ({ t, w, bold }: { t: string; w: number; bold?: boolean }) => (
  <div className="flex h-[30px] items-center"><Txt w={w} className={bold ? "text-[14.500px] font-bold" : "text-[14.500px]"}>{t}</Txt></div>
);
const Chevron = ({ className = "" }: { className?: string }) => (
  <Ico className={`h-[12px] w-[8px] ${className}`} box="0 0 8 12" sw={1.8}><path d="m1.500 1 5 5-5 5" /></Ico>
);

function RightPanel() {
  return (
    <div className="flex h-full w-[394px] shrink-0 flex-col border-l border-[#1f2526] bg-[#0a0e0f] text-[#aebbba]">
      <div className="flex h-[60px] shrink-0 items-center border-b border-[#1f2526] pl-[10px] pr-[11px]">
        <Ico className="h-[11px] w-[17px]" box="0 0 17 11" sw={1.7}><rect x="1" y="1" width="15" height="9" rx="1" /><path d="M4 7.800h.1" /></Ico>
        <Txt w={48} className="ml-[11px] text-[13.500px] font-bold">Metrics</Txt>
        <div className="flex-1" />
        <Ico className="h-[12px] w-[17px] text-[#6f8180]" box="0 0 17 12" sw={1.5}><path d="M1 0v12M4 6h12M11.500 1.500 16 6l-4.500 4.500" /></Ico>
      </div>
      <div className="flex h-[46px] shrink-0 items-center border-b border-[#1f2526] pl-[10px]"><Toggle /><Txt w={126} className="ml-[10px] text-[14px]">Metric Correlations</Txt></div>
      <div className="grid h-[41px] shrink-0 grid-cols-3 border-b border-[#1f2526] pl-[2px] pr-[2px] text-[#6f8180]">
        <div className="flex items-center justify-center border-b-[3px] border-[#46b565]">
          <Ico className="h-[21px] w-[21px]" box="0 0 21 21" sw={1.9}><path d="M1.500 7.500V17c0 2 1 2.800 2.500 2.800h13c1.500 0 2.500-1 2.500-2.500V13h-3c-3 3-7 3-9-1z" /><circle cx="14" cy="7" r="6" fill="#0a0e0f" /><circle cx="14" cy="7" r="2" /><path d="M14 4v3h3" /></Ico>
        </div>
        <div className="flex items-center justify-center"><svg viewBox="0 0 15 11" className="h-[11px] w-[15px] fill-current"><path d="M0 0h15l-1 2.500H1zM2.500 4.200h10l-1 2.500h-8zM5 8.400h5L9 10.900H6z" /></svg></div>
        <div className="flex items-center justify-center"><Bell className="h-[22px] w-[21px]" /></div>
      </div>
      <div className="ml-[10px] mt-[6px] flex h-[34px] w-[373px] shrink-0 items-center rounded-[2px] border border-[#343c3c] bg-[#2b3232] pl-[10px]"><Txt w={92} className="font-['Liberation_Sans',sans-serif] text-[15px] text-[#5f706f]">Search charts</Txt></div>
      <div className="ml-[10px] flex h-[30px] w-[373px] shrink-0 items-center justify-between text-[12px] text-[#6f8180]">
        <Txt w={178} className="text-[12px]">Showing <b>227</b> of total <b>227</b> charts</Txt>
        <Txt w={92} className="text-[12px] text-[#00ab44]">Add more charts</Txt>
      </div>
      <div className="mt-[12px] flex h-[25px] shrink-0 items-center pl-[10px]"><Toggle /><Txt w={108} className="ml-[10px] text-[14px]">Anomaly Rate %</Txt></div>
      <div className="mt-[15px] flex h-[499px] shrink-0">
        <div className="flex w-[383px] flex-col">
          <div className="ml-[66px] h-[333px] border-l border-[#252c2d] pl-[11px] pt-[3px]">
            <Leaf t="Apps" w={36} bold />
            <div className="ml-[13px] border-l border-[#252c2d] pl-[10px]">
              <Leaf t="CPU" w={27} /><Leaf t="Memory" w={56} /><Leaf t="Swap" w={35} /><Leaf t="Disk" w={28} /><Leaf t="Tasks" w={34} /><Leaf t="FDs" w={24} /><Leaf t="Uptime" w={49} />
            </div>
            <Leaf t="Users" w={38} bold /><Leaf t="Groups" w={51} bold /><Leaf t="IPC" w={24} bold />
          </div>
          <div className="flex h-[166px] flex-col border-t-2 border-[#252b2c] bg-[#131718] pt-[5px]">
            <div className="flex h-[30px] items-center pl-[15px] text-[#00ab44]"><Chevron className="-mt-[3px]" /><Cube className="-mt-[3px] ml-[17px] size-[14px]" /><Txt w={128} className="ml-[13px] text-[14.500px] font-bold">Containers &amp; VMs</Txt></div>
            <div className="flex h-[30px] items-center pl-[37px] text-[#00ab44]"><Chevron className="-mt-[3px]" /><FaDocker className="-mt-[3px] ml-[16px] size-[16px]" /><Txt w={49} className="ml-[13px] text-[14.500px] font-bold">Docker</Txt></div>
            <div className="ml-[66px] flex-1 border-l border-[#252c2d] pl-[11px]"><Leaf t="Summary" w={63} /><Leaf t="Containers" w={71} /><Leaf t="Health" w={43} /></div>
          </div>
        </div>
        <div className="w-[10px] bg-[#121617] pt-[140px]"><div className="h-[286px] rounded-[5px] bg-[#1c2223]" /></div>
      </div>
    </div>
  );
}

/* ---------- taskbar ---------- */
function Taskbar() {
  return (
    <div className="flex h-[60px] items-center border-t border-[#b9c0c8] bg-linear-to-r from-[#e1eef6] via-[#d6dff6] to-[#deebf7] text-[#1b1b1b]">
      <div className="flex w-[639px] items-center pl-[28px]">
        <svg viewBox="0 0 32 38" className="mb-[4px] h-[38px] w-[32px]">
          <defs><linearGradient id="sun" x1="0" y1="0" x2="1" y2="1"><stop offset="0" stopColor="#fcc72e" /><stop offset="1" stopColor="#f0681a" /></linearGradient><linearGradient id="cloud" x1="0" y1="0" x2="0" y2="1"><stop offset="0" stopColor="#dbe8fb" /><stop offset="1" stopColor="#8fb0ee" /></linearGradient></defs>
          <circle cx="12" cy="22" r="12" fill="url(#sun)" />
          <path d="M8 37a6 6 0 0 1-.5-11A7.500 7.500 0 0 1 21 24.500 6.300 6.300 0 0 1 21 37z" fill="url(#cloud)" />
          <circle cx="21" cy="10" r="10" fill="#c42b1c" />
          <text x="21" y="15" fontSize="13" textAnchor="middle" fill="#fff" fontFamily="Open Sans, sans-serif">4</text>
        </svg>
        <div className="mb-[2px] ml-[4px] flex flex-col items-start text-[14px] leading-[20px]"><Txt w={31}>32°C</Txt><Txt w={81} className="text-[#555d64]">Partly sunny</Txt></div>
      </div>
      <svg viewBox="0 0 30 30" className="size-[30px]"><defs><linearGradient id="win" x1="0" y1="0" x2="1" y2="1"><stop offset="0" stopColor="#4cc9fb" /><stop offset="1" stopColor="#0067c6" /></linearGradient></defs><path d="M0 1a1 1 0 0 1 1-1h13.500v14.500H0zM15.500 0H29a1 1 0 0 1 1 1v13.500H15.500zM0 15.500h14.500V30H1a1 1 0 0 1-1-1zM15.500 15.500H30V29a1 1 0 0 1-1 1H15.500z" fill="url(#win)" /></svg>
      <div className="ml-[18px] flex h-[39px] w-[273px] items-center rounded-full border border-[#c8cfdc] bg-[#f3f6fd] pl-[13px]">
        <Ico className="size-[19px]" box="0 0 19 19" sw={2.1}><circle cx="8" cy="8" r="6.800" /><path d="m13 13 5 5" /></Ico>
        <Txt w={51} className="ml-[12px] text-[15px] text-[#4e5257]">Search</Txt>
        <svg viewBox="0 0 32 28" className="ml-[125px] h-[28px] w-[32px]">
          <path d="M1 16c5-1 7 1 9 3l-2 6c-3-1-6-4-7-9zM31 16c-5-1-7 1-9 3l2 6c3-1 6-4 7-9z" fill="#8f86c9" />
          <path d="M1 1c5 1 9 4 10 9l-6 2C2 9 1 5 1 1zM31 1c-5 1-9 4-10 9l6 2c3-3 4-7 4-11z" fill="#6fa79c" /><path d="M3 3c3 1 6 4 6 7l-4 1C3 8 3 6 3 3zM29 3c-3 1-6 4-6 7l4 1c2-3 2-5 2-8z" fill="#ef8a8a" />
          <ellipse cx="16" cy="22" rx="6" ry="6" fill="#8cc5b6" /><ellipse cx="16" cy="14" rx="10" ry="7.500" fill="#9ad3c4" />
          <circle cx="12" cy="13" r="2.700" fill="#442319" /><circle cx="20" cy="13" r="2.700" fill="#442319" /><circle cx="12.500" cy="12.500" r="1" fill="#e0872f" /><circle cx="20.500" cy="12.500" r="1" fill="#e0872f" /><path d="M14 18h4l-2 2z" fill="#c23b3b" />
        </svg>
      </div>
      <svg viewBox="0 0 30 28" className="ml-[16px] h-[28px] w-[30px]"><rect x="0" y="8" width="23" height="20" rx="1" fill="#262626" /><rect x="8" y="0" width="22" height="20" rx="1" fill="#fff" opacity=".85" /><rect x="8" y="8" width="15" height="12" fill="#b5b5b5" /></svg>
      <svg viewBox="0 0 36 36" className="-mt-[8px] ml-[25px] size-[36px]">
        <path d="M0 35V21a14 14 0 1 1 14 14z" fill="#6a5fc8" /><rect x="6" y="15" width="11" height="12" rx="1.500" fill="#fff" /><path d="m18 19 4-2v8l-4-2z" fill="#fff" />
        <circle cx="26" cy="10" r="10" fill="#0a78d4" /><text x="26" y="15" fontSize="14" textAnchor="middle" fill="#fff" fontFamily="Open Sans, sans-serif">2</text>
      </svg>
      <svg viewBox="0 0 30 28" className="ml-[19px] h-[28px] w-[30px]">
        <defs><linearGradient id="cpA" x1="0" y1="0" x2="0" y2="1"><stop offset="0" stopColor="#1a77e0" /><stop offset=".6" stopColor="#3bc48e" /><stop offset="1" stopColor="#f2cf2c" /></linearGradient><linearGradient id="cpB" x1="1" y1="0" x2="0" y2="1"><stop offset="0" stopColor="#9a4be8" /><stop offset=".5" stopColor="#ee5a86" /><stop offset="1" stopColor="#fa9a48" /></linearGradient></defs>
        <path d="M8 0h10c3 0 3 2 4 6h-5c-2 0-3 1-4 4l-2 6c-1 3-2 4-5 4-5 0-7-2-5-8L4 4c1-3 2-4 4-4z" fill="url(#cpA)" />
        <path d="M22 28H12c-3 0-3-2-4-6h5c2 0 3-1 4-4l2-6c1-3 2-4 5-4 5 0 7 2 5 8l-3 8c-1 3-2 4-4 4z" fill="url(#cpB)" />
      </svg>
      <div className="ml-[25px] flex h-[58px] w-[30px] flex-col items-center justify-end pb-[5px]">
        <svg viewBox="0 0 30 28" className="h-[28px] w-[30px]"><path d="M0 3c0-1 1-2 2-2h8l3 3v4H0z" fill="#dd9a09" /><path d="M0 6h12l2-2h15c1 0 1 .5 1 1v21c0 .6-.4 1-1 1H1c-.6 0-1-.4-1-1z" fill="#fcc630" /><path d="M5 28v-6c0-1.500 1-2.500 2.500-2.500h15c1.500 0 2.500 1 2.500 2.500v6z" fill="#1673c7" /><path d="M9 23.500h12" stroke="#0c4d92" strokeWidth="1.500" /></svg>
        <div className="mt-[6px] h-[4px] w-[8px] rounded-full bg-[#80848c]" />
      </div>
      <div className="ml-[16px] flex h-[48px] w-[48px] flex-col items-center rounded-[5px] border border-[#d9e0ee] bg-[#edf1fb] pt-[8px]">
        <svg viewBox="0 0 30 30" className="size-[30px]">
          <circle cx="15" cy="15" r="15" fill="#fbc116" />
          <path d="M15 15 2 7.500A15 15 0 0 1 28 7.500H15z" fill="#e33b2e" />
          <path d="M2 7.500A15 15 0 0 0 15 30l6.500-11.300L15 15 8.500 18.700z" fill="#21a04a" />
          <circle cx="15" cy="15" r="7" fill="#fff" /><circle cx="15" cy="15" r="5.500" fill="#3879ee" />
        </svg>
        <div className="mt-[4px] h-[4px] w-[20px] shrink-0 rounded-full bg-[#0a78d4]" />
      </div>
      <div className="ml-[16px] flex h-[58px] w-[30px] flex-col items-center justify-end pb-[5px]">
        <svg viewBox="0 0 30 29" className="h-[29px] w-[30px]"><rect x="0" y="0" width="29" height="21" fill="#bdbdbd" /><rect x="1" y="1" width="27" height="19" fill="#2c2c2c" /><path d="m3 4 3 2.500L3 9M7 9h2" stroke="#fff" strokeWidth="1.300" fill="none" /><path d="m8 17 6-5 6 6-6 5z" fill="#e8372c" /><path d="m16 12 5-4 7 5-6 5z" fill="#3d7df0" /><path d="m14 23 7-7 8 5-9 8z" fill="#6fc83a" /></svg>
        <div className="mt-[5px] h-[4px] w-[8px] rounded-full bg-[#80848c]" />
      </div>
      <div className="flex-1" />
      <Ico className="h-[8px] w-[14px]" box="0 0 14 8" sw={1.7}><path d="m1 7 6-6 6 6" /></Ico>
      <div className="ml-[25px] flex w-[30px] flex-col items-center text-[13.500px] leading-[20px]"><Txt w={28}>ENG</Txt><Txt w={14}>IN</Txt></div>
      <Ico className="ml-[22px] h-[16px] w-[20px]" box="0 0 20 16" sw={1.4}><path d="M1 5.500a13 13 0 0 1 18 0M3.800 8.500a9 9 0 0 1 12.400 0M6.500 11.300a5 5 0 0 1 7 0" /><circle cx="10" cy="14" r="1.200" fill="currentColor" /></Ico>
      <Ico className="ml-[10px] h-[16px] w-[20px]" box="0 0 20 16" sw={1.3}><path d="M1 5.500v5h2.500l4 3.500V2l-4 3.500zM10.500 5.500c1.200 1.500 1.200 3.500 0 5M13.500 3.500c2 2.500 2 6.500 0 9M16.300 1.500c3 4 3 9 0 13" /></Ico>
      <Ico className="ml-[10px] h-[16px] w-[20px]" box="0 0 20 16" sw={1.6}><path d="M7 3h8c1.500 0 2 .8 2 2v7c0 1.200-.5 2-2 2H4c-1.500 0-2-.8-2-2v-2M18.800 7v3" /><path d="M8 5h7v7H4z" fill="currentColor" /><path d="M4 .5 1 6h3L3 9.500" /></Ico>
      <div className="ml-[20px] mr-[25px] flex w-[77px] flex-col items-end pb-[1px] text-[14px] leading-[20px]"><Txt w={36}>11:57</Txt><Txt w={77}>17-04-2025</Txt></div>
    </div>
  );
}

export default function App() {
  return (
    <div className="flex h-[1080px] w-[1920px] flex-col overflow-hidden bg-[#0a0e0f] font-['Open_Sans',sans-serif]">
      <TabStrip />
      <div className="h-[100px] shrink-0 border-b border-[#3a3d40] bg-linear-to-b from-[#031c3a] via-[#0c3059] to-[#05234a]">
        <Toolbar />
        <Bookmarks />
      </div>
      <div className="flex h-[870px] shrink-0">
        <Sidebar />
        <div className="flex min-w-0 flex-1 flex-col">
          <TopBar />
          <NavTabs />
          <div className="flex h-[772px]">
            <Main />
            <RightPanel />
          </div>
        </div>
      </div>
      <Taskbar />
    </div>
  );
}
